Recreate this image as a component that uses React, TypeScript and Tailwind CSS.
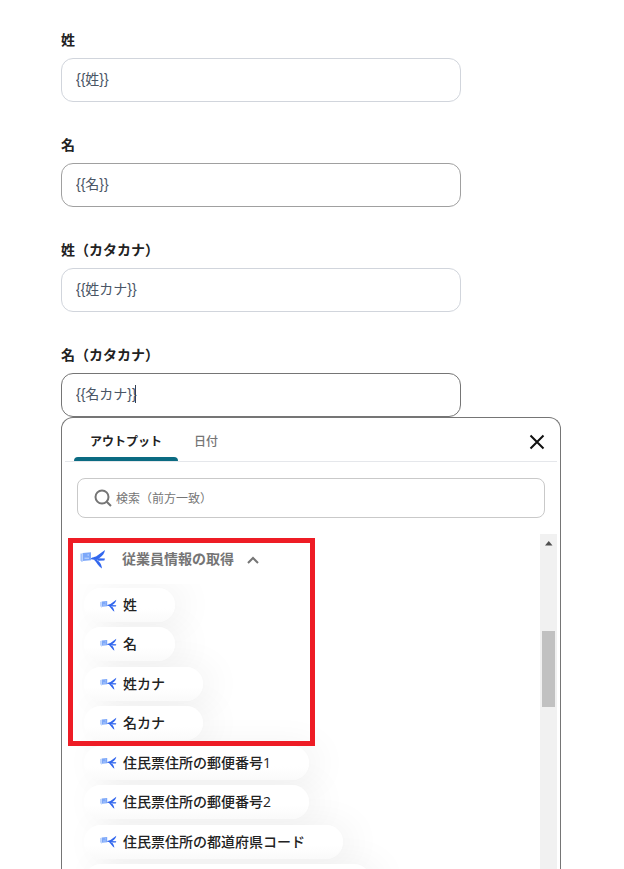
import { useState } from 'react';

const fields = [
  { id: 'last-name', label: '姓', value: '{{姓}}', border: 'border-gray-300' },
  { id: 'first-name', label: '名', value: '{{名}}', border: 'border-[#a0a0a0]' },
  { id: 'last-name-kana', label: '姓（カタカナ）', value: '{{姓カナ}}', border: 'border-gray-300' },
  { id: 'first-name-kana', label: '名（カタカナ）', value: '{{名カナ}}', border: 'border-[#757575]', active: true },
];

const outputs = [
  '姓',
  '名',
  '姓カナ',
  '名カナ',
  '住民票住所の郵便番号1',
  '住民票住所の郵便番号2',
  '住民票住所の都道府県コード',
];

function BirdIcon({ className }: { className: string }) {
  return (
    <svg className={className} viewBox="0 0 26 20" fill="none" aria-hidden="true">
      <path d="M2.500 4 11 3.200v8L2.500 12Z" fill="#7da8f9" />
      <path d="M1.200 4.500v7l1.300 1" stroke="#9dbffb" strokeWidth="1.500" />
      <path d="M4.500 9.200h4.500M7.500 6h1.500" stroke="#c9dcff" strokeWidth="1" />
      <path d="M11 9.200c2-.9 3.500-1.200 5-1.700L25 1c-.4 3.200-2.500 5.900-5.500 7.900L16.500 11 11 10.200Z" fill="#3267ee" />
      <path d="m16 9.300 9 .2-.7 2-6 .2Z" fill="#3267ee" />
      <path d="M13.500 10.200c3.500-.4 8 3 8.500 9.300-3.500-2-5-6-8.500-9.300Z" fill="#3267ee" />
    </svg>
  );
}

function Field({ field }: { field: (typeof fields)[number] }) {
  const [value, setValue] = useState(field.value);

  return (
    <div className="flex flex-col gap-2">
      <label htmlFor={field.id} className="text-sm leading-5 font-bold text-[#222]">
        {field.label}
      </label>
      <div className="relative max-w-[400px]">
        <input
          id={field.id}
          type="text"
          value={value}
          onChange={(e) => setValue(e.target.value)}
          className={`block h-11 w-full rounded-xl border bg-white px-3.5 pb-1 font-['Liberation_Sans','Noto_Sans_CJK_JP',sans-serif] text-sm text-gray-600 outline-none ${field.border}`}
        />
        {field.active && <span className="absolute top-3 left-[74px] h-[18px] w-px bg-gray-700" />}
      </div>
    </div>
  );
}

function Scrollbar() {
  return (
    <div className="flex w-[17px] shrink-0 flex-col items-center bg-[#f1f1f1]">
      <svg className="h-[17px] w-[17px]" viewBox="0 0 17 17" aria-hidden="true">
        <path d="M5 11.500h7.500L8.750 7Z" fill="#505050" />
      </svg>
      <div className="mt-20 h-[76px] w-[13px] bg-[#c1c1c1]" />
    </div>
  );
}

function OutputPicker() {
  return (
    <section className="flex min-h-0 max-w-[500px] flex-1 flex-col rounded-t-xl border border-b-0 border-[#757575] bg-white px-[3px]">
      <div className="flex h-11 shrink-0 items-stretch border-b border-gray-200 pr-2 pl-[9px] text-xs" role="tablist">
        <button type="button" role="tab" aria-selected="true" className="flex flex-col font-bold text-[#222]">
          <span className="flex flex-1 items-center px-4 pt-2">アウトプット</span>
          <span className="h-1 w-full rounded-t-sm bg-[#0b6b82]" />
        </button>
        <button type="button" role="tab" aria-selected="false" className="px-4 pt-1 font-medium text-[#757575]">
          日付
        </button>
        <button type="button" aria-label="閉じる" className="ml-auto flex w-6 items-center justify-center pt-1">
          <svg className="h-4 w-4" viewBox="0 0 16 16" fill="none" stroke="#111" strokeWidth="2" aria-hidden="true">
            <path d="m1.500 1.500 13 13m0-13-13 13" />
          </svg>
        </button>
      </div>

      <label className="mx-3 mt-4 flex h-10 shrink-0 items-center gap-1 rounded-lg border border-[#c9c9c9] pl-4">
        <svg className="h-[18px] w-[18px] shrink-0" viewBox="0 0 18 18" fill="none" stroke="#757575" strokeWidth="2" aria-hidden="true">
          <circle cx="8" cy="8" r="6.500" />
          <path d="m12.700 12.700 4.300 4.300" />
        </svg>
        <input
          type="search"
          aria-label="検索"
          placeholder="検索（前方一致）"
          className="w-full bg-transparent pt-0.5 text-xs outline-none placeholder:text-[#757575]"
        />
      </label>

      <div className="mt-4 flex min-h-0 flex-1">
        <div className="relative min-w-0 flex-1 overflow-hidden pl-[15px]">
          <button type="button" className="flex h-[50px] items-center text-sm font-bold text-[#757575]">
            <BirdIcon className="h-5 w-[26px]" />
            <span className="ml-4">従業員情報の取得</span>
            <svg className="ml-3 h-3 w-3.5" viewBox="0 0 14 12" fill="none" stroke="#757575" strokeWidth="2" aria-hidden="true">
              <path d="m2 10 5-5 5 5" />
            </svg>
          </button>
          <ul className="-ml-[15px] flex h-[314px] flex-col items-start justify-between overflow-hidden pt-1 pl-[19px]">
            {outputs.map((name) => (
              <li key={name} className="rounded-full shadow-[10px_0px_36px_rgba(0,0,0,0.06)]">
                <button
                  type="button"
                  className="relative flex h-[34px] items-center gap-1.5 rounded-full bg-linear-to-b from-white from-60% to-[#fafafa] pr-[38px] pl-4 text-sm font-medium text-[#222]"
                >
                  <BirdIcon className="h-[13px] w-[17px]" />
                  {name}
                </button>
              </li>
            ))}
            <li className="h-[34px] w-[287px] rounded-full bg-white shadow-[10px_0px_36px_rgba(0,0,0,0.06)]" />
          </ul>
          <div className="pointer-events-none absolute top-1 left-[3px] h-[208px] w-[247px] border-[5px] border-[#ee1c25]" />
        </div>
        <Scrollbar />
      </div>
    </section>
  );
}

export default function App() {
  return (
    <main className="flex h-screen flex-col overflow-hidden bg-white pt-[30px] pr-6 pl-[61px] font-['Open_Sans','Noto_Sans_CJK_JP',sans-serif]">
      <form className="flex shrink-0 flex-col gap-[33px]">
        {fields.map((field) => (
          <Field key={field.id} field={field} />
        ))}
      </form>
      <OutputPicker />
    </main>
  );
}
